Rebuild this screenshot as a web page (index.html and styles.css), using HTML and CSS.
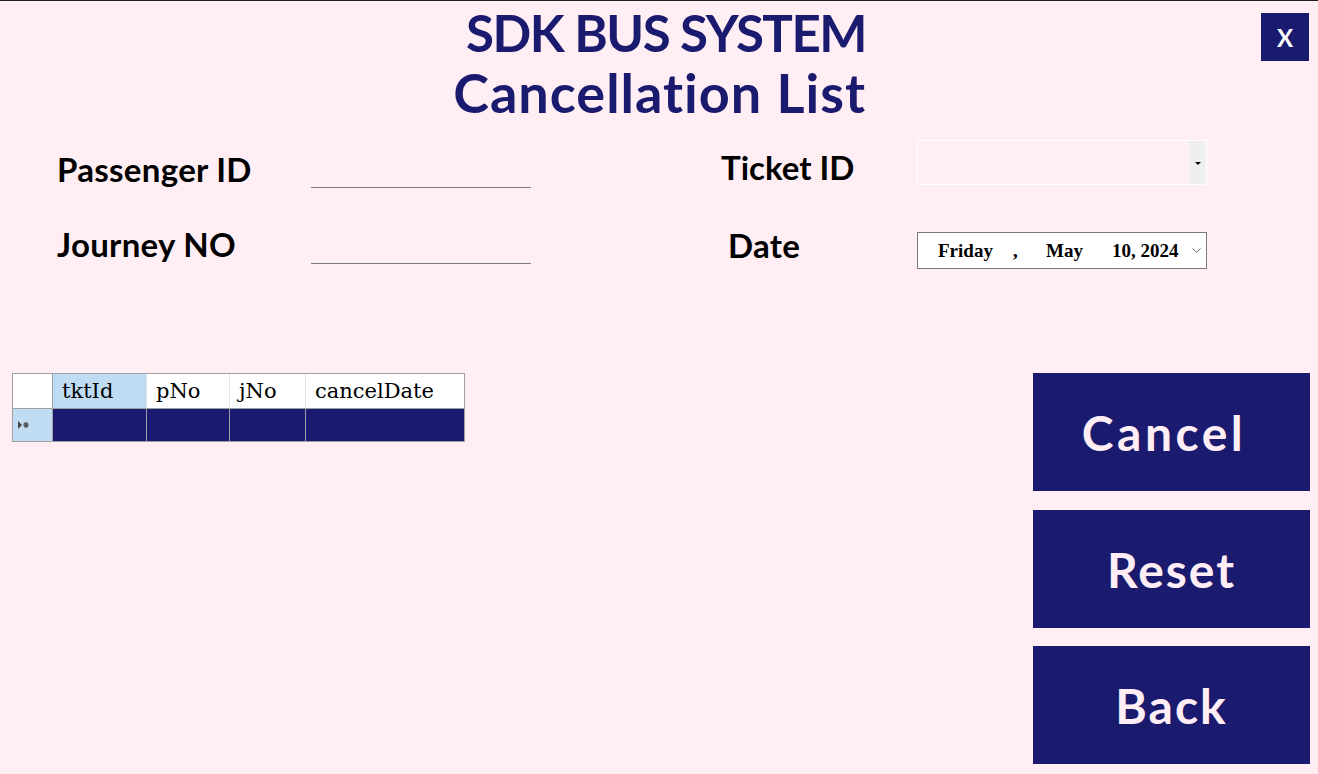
FILE: index.html
```html
<!DOCTYPE html>
<html>
<head>
<meta charset="utf-8">
<title>Cancellation List</title>
<link rel="stylesheet" href="styles.css">
</head>
<body>
<header class="header">
  <div class="titles">
    <div class="title-line title-main">SDK BUS SYSTEM</div>
    <div class="title-line title-sub">Cancellation List</div>
  </div>
  <button class="close-btn">X</button>
</header>

<section class="form">
  <div class="label label-pid">Passenger ID</div>
  <div class="line-input line-input-1"></div>
  <div class="spacer"></div>
  <div class="label label-tid">Ticket ID</div>
  <div class="combo">
    <div class="combo-field"></div>
    <div class="combo-btn"><span class="combo-arrow"></span></div>
  </div>

  <div class="label label-jno">Journey NO</div>
  <div class="line-input line-input-2"></div>
  <div class="spacer"></div>
  <div class="label label-date">Date</div>
  <div class="datepicker">
    <span class="dp-day">Friday</span>
    <span class="dp-comma">,</span>
    <span class="dp-month">May</span>
    <span class="dp-rest">10, 2024</span>
    <svg class="dp-chevron" width="9" height="6" viewBox="0 0 9 6"><path d="M0.5 0.5 L4.5 4.5 L8.5 0.5" fill="none" stroke="#6d6d6d" stroke-width="1"/></svg>
  </div>
</section>

<section class="bottom">
  <div class="grid">
    <div class="cell hdr corner"></div>
    <div class="cell hdr sel">tktId</div>
    <div class="cell hdr light">pNo</div>
    <div class="cell hdr light">jNo</div>
    <div class="cell hdr light">cancelDate</div>
    <div class="cell rowhdr">
      <svg width="12" height="8" viewBox="0 0 12 8"><path d="M0 0 L4 4 L0 8 Z" fill="#444"/><path d="M5 4 H11 M8 1 V7 M6 2 L10 6 M10 2 L6 6" stroke="#555" stroke-width="1.2"/></svg>
    </div>
    <div class="cell data"></div>
    <div class="cell data"></div>
    <div class="cell data"></div>
    <div class="cell data"></div>
  </div>

  <div class="actions">
    <button class="action action-cancel">Cancel</button>
    <button class="action">Reset</button>
    <button class="action">Back</button>
  </div>
</section>
</body>
</html>
```

FILE: styles.css
```css
html, body {
  margin: 0;
  padding: 0;
}
body {
  width: 1318px;
  height: 773px;
  background: #FFEEF3;
  border-top: 1px solid #1e1e1e;
  font-family: "Lato", "DejaVu Sans", sans-serif;
  overflow: hidden;
}

.header {
  display: flex;
  align-items: flex-start;
  height: 139px;
}
.titles {
  width: 866px;
  text-align: right;
  padding-top: 2px;
}
.title-line {
  font-size: 54px;
  font-weight: 700;
  line-height: 60px;
  color: #1a1a6e;
}
.title-main {
  font-size: 51px;
  letter-spacing: -1.5px;
}
.title-sub { letter-spacing: 1px; }

.close-btn {
  margin: 12px 9px 0 auto;
  width: 48px;
  height: 48px;
  border: none;
  background: #1a1a6e;
  color: #ffffff;
  font-family: "Lato", sans-serif;
  font-weight: 700;
  font-size: 24px;
  padding: 0;
}

.form {
  display: grid;
  grid-template-columns: 254px 220px 190px 196px 290px;
  grid-template-rows: 48px 48px;
  row-gap: 36px;
  padding-left: 57px;
}
.label {
  font-size: 33px;
  font-weight: 700;
  line-height: 40px;
  color: #000;
  align-self: start;
  letter-spacing: 0.3px;
}
.label-pid { margin-top: 9px; }
.label-tid { margin-top: 7px; letter-spacing: 0; }
.label-jno { margin-top: 0; }
.label-date { margin-top: 1px; padding-left: 7px; }

.line-input {
  box-sizing: border-box;
  border-bottom: 1px solid #7c7c7c;
  align-self: start;
}
.line-input-1 { height: 48px; }
.line-input-2 { height: 40px; }

.combo {
  box-sizing: border-box;
  height: 45px;
  border: 1px solid #ffffff;
  display: flex;
}
.combo-field { flex: 1; }
.combo-btn {
  width: 17px;
  background: #efefef;
  display: flex;
  align-items: center;
  justify-content: center;
}
.combo-arrow {
  width: 0;
  height: 0;
  border-left: 3px solid transparent;
  border-right: 3px solid transparent;
  border-top: 3px solid #000;
  margin-top: 1px;
}

.datepicker {
  box-sizing: border-box;
  margin-top: 8px;
  height: 37px;
  background: #ffffff;
  border: 1px solid #7a7a7a;
  display: flex;
  align-items: center;
  padding-left: 20px;
  font-family: "Liberation Serif", "Times New Roman", serif;
  font-weight: 700;
  font-size: 19px;
  color: #000;
}
.dp-day { width: 75px; }
.dp-comma { width: 33px; }
.dp-month { width: 66px; }
.dp-rest { width: 80px; }
.dp-chevron { margin-top: 1px; }

.bottom {
  display: flex;
  justify-content: space-between;
  align-items: flex-start;
  margin-top: 101px;
  padding-left: 12px;
  padding-right: 8px;
}

.grid {
  display: grid;
  grid-template-columns: 39px 93px 82px 75px 158px;
  grid-template-rows: 34px 32px;
  gap: 1px;
  border: 1px solid #a0a0a0;
  background: #a0a0a0;
}
.cell {
  font-family: "DejaVu Serif", "Liberation Serif", serif;
  font-size: 21px;
  color: #000;
  padding-left: 9px;
  box-sizing: border-box;
}
.hdr {
  background: #ffffff;
  line-height: 34px;
}
.hdr.sel { background: #bfdcf3; }
.hdr.light { box-shadow: -1px 0 0 #e3e3e3; }
.rowhdr {
  background: #bfdcf3;
  padding-left: 5px;
  display: flex;
  align-items: center;
}
.data { background: #1a1a6e; }

.actions {
  display: flex;
  flex-direction: column;
  gap: 18px;
}
.action {
  width: 277px;
  height: 118px;
  border: none;
  background: #1a1a6e;
  color: #FFEEF5;
  font-family: "Lato", sans-serif;
  font-size: 48px;
  font-weight: 700;
  letter-spacing: 2px;
  padding: 0;
}
.action-cancel {
  padding-right: 15px;
  margin-bottom: 1px;
  letter-spacing: 3.5px;
}
```
